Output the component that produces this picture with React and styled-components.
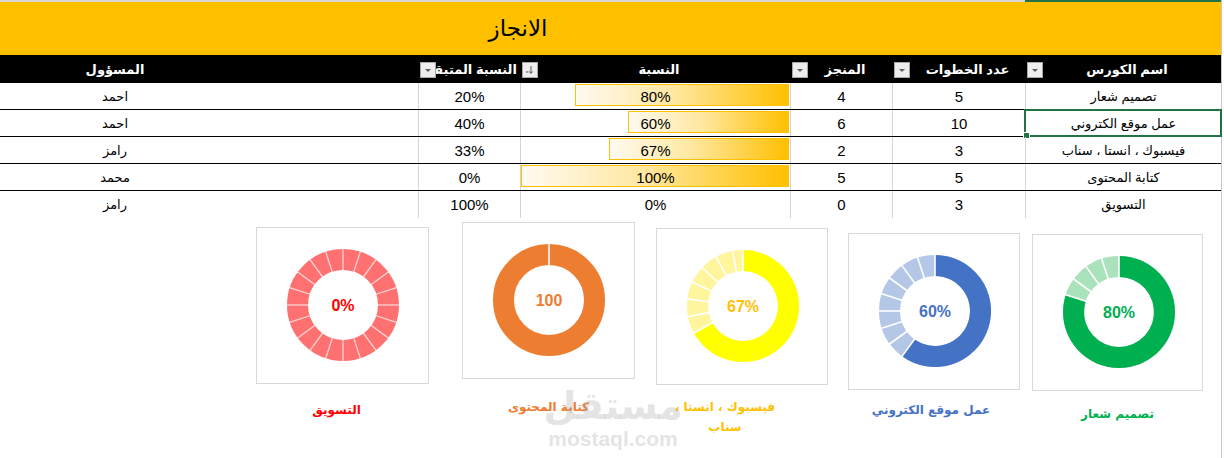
import React from "react";
import styled, { createGlobalStyle } from "styled-components";

const GlobalStyle = createGlobalStyle`
  * { box-sizing: border-box; }
  body {
    margin: 0;
    background: #fff;
    font-family: "Liberation Sans", "DejaVu Sans", Arial, sans-serif;
  }
`;

const COLS = "196px 133px 102px 270px 102px 418px";

const Sheet = styled.div`
  position: relative;
  width: 1224px;
  height: 458px;
  overflow: hidden;
  background: #fff;
`;

const Canvas = styled.div`
  width: 1222px;
  height: 458px;
  border-right: 1px solid #c8c8c8;
`;

const TopStrip = styled.div`
  display: flex;
  height: 2px;
  background: #d6d6d6;
  direction: rtl;
`;

const StripMark = styled.div`
  width: 196px;
  background: #217346;
`;

const TitleBar = styled.div`
  display: flex;
  height: 53px;
  background: #ffc000;
`;

const Title = styled.div`
  width: 1036px;
  text-align: center;
  font-family: "DejaVu Sans", sans-serif;
  font-size: 23px;
  line-height: 53px;
  color: #000;
`;

const HeaderRow = styled.div`
  display: grid;
  grid-template-columns: ${COLS};
  direction: rtl;
  height: 28px;
  background: #000;
`;

const HeadCell = styled.div`
  position: relative;
  display: flex;
  align-items: center;
  justify-content: center;
  padding-left: ${(p) => p.$padLeft ?? 8}px;
  padding-right: ${(p) => p.$padRight || 0}px;
  color: #fff;
  font-weight: bold;
  font-size: 13px;
  white-space: nowrap;
`;

const FilterButton = styled.span`
  position: absolute;
  left: 2px;
  top: 7px;
  width: 16px;
  height: 16px;
  background: #eeeeee;
  border: 1px solid #a6a6a6;
  display: flex;
  align-items: center;
  justify-content: center;
`;

const DataRow = styled.div`
  display: grid;
  grid-template-columns: ${COLS};
  direction: rtl;
  height: 27px;
  border-bottom: ${(p) => (p.$last ? "none" : "1px solid #000")};
`;

const Cell = styled.div`
  position: relative;
  display: flex;
  align-items: center;
  justify-content: center;
  border-left: ${(p) => (p.$edge ? "none" : "1px solid #d4d4d4")};
  padding-right: ${(p) => p.$padRight || 0}px;
  font-size: ${(p) => (p.$arabic ? 13 : 15)}px;
  color: #000;
  white-space: nowrap;
  outline: ${(p) => (p.$selected ? "2px solid #217346" : "none")};
  outline-offset: -1px;
  &::after {
    content: "";
    display: ${(p) => (p.$selected ? "block" : "none")};
    position: absolute;
    left: -3px;
    bottom: -3px;
    width: 5px;
    height: 5px;
    background: #217346;
    border: 1px solid #fff;
  }
`;

const BarCell = styled.div`
  display: grid;
  border-left: 1px solid #d4d4d4;
  font-size: 15px;
`;

const Bar = styled.div`
  grid-area: 1 / 1;
  justify-self: start;
  margin-top: 1px;
  margin-right: 1px;
  height: 22px;
  border: 1px solid #ffc000;
  background: linear-gradient(to right, #fffaf0 0%, #ffe8a3 45%, #ffc000 100%);
`;

const BarText = styled.div`
  grid-area: 1 / 1;
  display: flex;
  align-items: center;
  justify-content: center;
  color: #000;
`;

const ChartsRow = styled.div`
  display: flex;
  align-items: flex-start;
  padding-left: 256px;
`;

const ChartCol = styled.div`
  display: flex;
  flex-direction: column;
  align-items: center;
  margin-left: ${(p) => p.$ml}px;
  margin-top: ${(p) => p.$mt}px;
`;

const ChartCard = styled.div`
  width: ${(p) => p.$w}px;
  height: 157px;
  border: 1px solid #d9d9d9;
  background: #fff;
  svg { display: block; }
`;

const ChartLabel = styled.div`
  margin-top: ${(p) => p.$gap}px;
  margin-left: ${(p) => p.$shift || 0}px;
  width: ${(p) => p.$lw}px;
  text-align: center;
  direction: rtl;
  font-family: "DejaVu Sans", sans-serif;
  font-weight: bold;
  font-size: 12px;
  line-height: 20px;
  color: ${(p) => p.$color};
`;

const Watermark = styled.div`
  position: absolute;
  left: 548px;
  top: 384px;
  width: 130px;
  display: flex;
  flex-direction: column;
  align-items: center;
  color: rgba(160, 160, 160, 0.3);
  font-weight: bold;
  pointer-events: none;
`;

const WatermarkLogo = styled.div`
  font-family: "DejaVu Sans", sans-serif;
  font-size: 38px;
  line-height: 44px;
`;

const WatermarkUrl = styled.div`
  font-family: "Liberation Sans", sans-serif;
  font-size: 21px;
  line-height: 22px;
`;

const courses = [
  { name: "تصميم شعار", steps: 5, done: 4, pct: 80, rem: "20%", owner: "احمد" },
  { name: "عمل موقع الكتروني", steps: 10, done: 6, pct: 60, rem: "40%", owner: "احمد", selected: true },
  { name: "فيسبوك ، انستا ، سناب", steps: 3, done: 2, pct: 67, rem: "33%", owner: "رامز" },
  { name: "كتابة المحتوى", steps: 5, done: 5, pct: 100, rem: "0%", owner: "محمد" },
  { name: "التسويق", steps: 3, done: 0, pct: 0, rem: "100%", owner: "رامز" },
];

const charts = [
  { label: "التسويق", value: 0, text: "0%", main: "#ff7171", light: "#ff7171", color: "#ff0000", w: 173, ml: 0, mt: 9, gap: 16, shift: -12, lw: 110 },
  { label: "كتابة المحتوى", value: 100, text: "100", main: "#ed7d31", light: "#ed7d31", color: "#ed7d31", w: 173, ml: 33, mt: 4, gap: 18, shift: 0, lw: 110 },
  { label: "فيسبوك ، انستا ، سناب", value: 67, text: "67%", main: "#ffff00", light: "#fff59d", color: "#ffc000", w: 172, ml: 21, mt: 10, gap: 12, shift: -34, lw: 102 },
  { label: "عمل موقع الكتروني", value: 60, text: "60%", main: "#4472c4", light: "#b4c7e7", color: "#4472c4", w: 172, ml: 20, mt: 15, gap: 10, shift: -6, lw: 150 },
  { label: "تصميم شعار", value: 80, text: "80%", main: "#00b050", light: "#a9e2bb", color: "#00b050", w: 171, ml: 12, mt: 16, gap: 13, shift: 0, lw: 110 },
];

const FilterIcon = ({ sorted }) => (
  <svg width="10" height="10" viewBox="0 0 10 10">
    {sorted ? (
      <>
        <path d="M6 1 V8" stroke="#555" strokeWidth="1" />
        <path d="M4.5 6.5 L6 8.5 L7.5 6.5" stroke="#555" strokeWidth="1" fill="none" />
        <path d="M1 7 L3.5 7" stroke="#555" strokeWidth="1" />
      </>
    ) : (
      <path d="M2 4 L8 4 L5 7 Z" fill="#606060" />
    )}
  </svg>
);

const pt = (cx, cy, r, a) => {
  const rad = (a * Math.PI) / 180;
  return [cx + r * Math.sin(rad), cy - r * Math.cos(rad)];
};

const sector = (cx, cy, R, r, a0, a1) => {
  const large = a1 - a0 > 180 ? 1 : 0;
  const [x0, y0] = pt(cx, cy, R, a0);
  const [x1, y1] = pt(cx, cy, R, a1);
  const [x2, y2] = pt(cx, cy, r, a1);
  const [x3, y3] = pt(cx, cy, r, a0);
  return `M${x0} ${y0} A${R} ${R} 0 ${large} 1 ${x1} ${y1} L${x2} ${y2} A${r} ${r} 0 ${large} 0 ${x3} ${y3} Z`;
};

const Donut = ({ chart, w }) => {
  const cx = 86;
  const cy = 77;
  const R = 56;
  const r = 35;
  const doneAngle = (chart.value / 100) * 360;
  const cuts = [0];
  for (let p = chart.value + 5; p < 100; p += 5) cuts.push((p / 100) * 360);
  if (chart.value > 0 && chart.value < 100) cuts.push(doneAngle);

  return (
    <svg width={w - 2} height="155" viewBox={`0 0 ${w - 2} 155`}>
      {chart.value >= 100 ? (
        <circle cx={cx} cy={cy} r={(R + r) / 2} fill="none" stroke={chart.main} strokeWidth={R - r} />
      ) : (
        <>
          <circle cx={cx} cy={cy} r={(R + r) / 2} fill="none" stroke={chart.light} strokeWidth={R - r} />
          {chart.value > 0 && <path d={sector(cx, cy, R, r, 0, doneAngle)} fill={chart.main} />}
        </>
      )}
      {cuts.map((a, i) => {
        const [x0, y0] = pt(cx, cy, r - 1, a);
        const [x1, y1] = pt(cx, cy, R + 1, a);
        return (
          <line
            key={i}
            x1={x0}
            y1={y0}
            x2={x1}
            y2={y1}
            stroke="#fff"
            strokeWidth={chart.value === 0 ? 1.3 : 1.6}
            strokeOpacity={chart.value === 0 ? 0.7 : 1}
          />
        );
      })}
      <text
        x={cx}
        y={cy + 6}
        textAnchor="middle"
        fontFamily="Liberation Sans, Arial, sans-serif"
        fontWeight="bold"
        fontSize="16"
        fill={chart.color}
      >
        {chart.text}
      </text>
    </svg>
  );
};

const App = () => {
  return (
    <Sheet>
      <GlobalStyle />
      <Canvas>
        <TopStrip>
          <StripMark />
        </TopStrip>
        <TitleBar>
          <Title>الانجاز</Title>
        </TitleBar>

        <HeaderRow>
          <HeadCell>
            اسم الكورس
            <FilterButton>
              <FilterIcon />
            </FilterButton>
          </HeadCell>
          <HeadCell $padLeft={18}>
            عدد الخطوات
            <FilterButton>
              <FilterIcon />
            </FilterButton>
          </HeadCell>
          <HeadCell>
            المنجز
            <FilterButton>
              <FilterIcon />
            </FilterButton>
          </HeadCell>
          <HeadCell>
            النسبة
            <FilterButton>
              <FilterIcon sorted />
            </FilterButton>
          </HeadCell>
          <HeadCell $padLeft={0}>
            النسبة المتبقية
            <FilterButton>
              <FilterIcon />
            </FilterButton>
          </HeadCell>
          <HeadCell $padLeft={0} $padRight={188}>
            المسؤول
          </HeadCell>
        </HeaderRow>

        {courses.map((c, i) => (
          <DataRow key={c.name} $last={i === courses.length - 1}>
            <Cell $arabic $selected={c.selected}>
              {c.name}
            </Cell>
            <Cell>{c.steps}</Cell>
            <Cell>{c.done}</Cell>
            <BarCell>
              {c.pct > 0 && <Bar style={{ width: `${(c.pct / 100) * 268}px` }} />}
              <BarText>{c.pct}%</BarText>
            </BarCell>
            <Cell>{c.rem}</Cell>
            <Cell $arabic $edge $padRight={188}>
              {c.owner}
            </Cell>
          </DataRow>
        ))}

        <ChartsRow>
          {charts.map((ch) => (
            <ChartCol key={ch.label} $ml={ch.ml} $mt={ch.mt}>
              <ChartCard $w={ch.w}>
                <Donut chart={ch} w={ch.w} />
              </ChartCard>
              <ChartLabel $color={ch.color} $gap={ch.gap} $shift={ch.shift} $lw={ch.lw}>
                {ch.label}
              </ChartLabel>
            </ChartCol>
          ))}
        </ChartsRow>
      </Canvas>

      <Watermark>
        <WatermarkLogo>مستقل</WatermarkLogo>
        <WatermarkUrl>mostaql.com</WatermarkUrl>
      </Watermark>
    </Sheet>
  );
};

export default App;
